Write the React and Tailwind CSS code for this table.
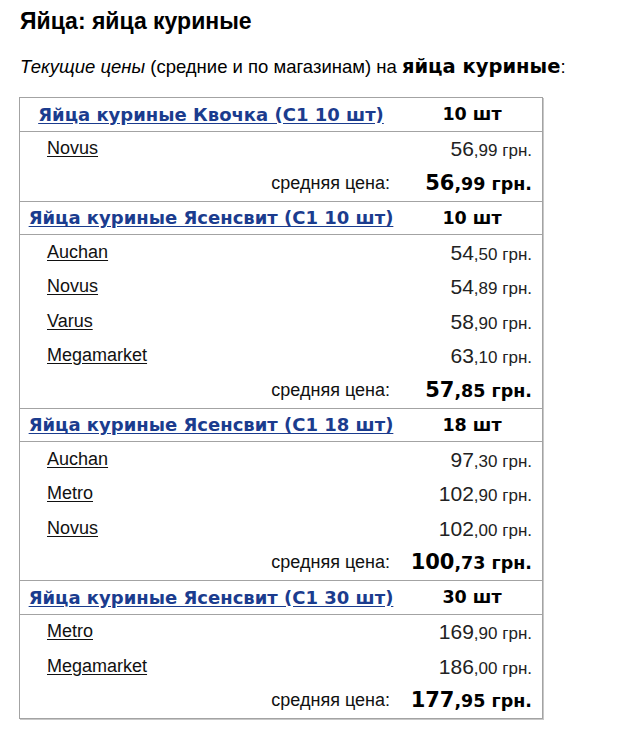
import React from 'react';

const sections = [
  {
    title: 'Яйца куриные Квочка (С1 10 шт)',
    pack: '10 шт',
    stores: [['Novus', '56', ',99']],
    avg: ['56', ',99'],
  },
  {
    title: 'Яйца куриные Ясенсвит (С1 10 шт)',
    pack: '10 шт',
    stores: [
      ['Auchan', '54', ',50'],
      ['Novus', '54', ',89'],
      ['Varus', '58', ',90'],
      ['Megamarket', '63', ',10'],
    ],
    avg: ['57', ',85'],
  },
  {
    title: 'Яйца куриные Ясенсвит (С1 18 шт)',
    pack: '18 шт',
    stores: [
      ['Auchan', '97', ',30'],
      ['Metro', '102', ',90'],
      ['Novus', '102', ',00'],
    ],
    avg: ['100', ',73'],
  },
  {
    title: 'Яйца куриные Ясенсвит (С1 30 шт)',
    pack: '30 шт',
    stores: [
      ['Metro', '169', ',90'],
      ['Megamarket', '186', ',00'],
    ],
    avg: ['177', ',95'],
  },
];

const verdana = "font-['DejaVu_Sans',Verdana,sans-serif] font-bold";

const Section = ({ s, first }) => (
  <div className={first ? '' : 'border-t border-[#a3a3a3]'}>
    {/* header */}
    <div className="grid grid-cols-[382px_1fr] h-[33.5px] items-center border-b border-[#a3a3a3]">
      <div className="text-center">
        <a href="#" className={`${verdana} text-[18px] text-[#1b3c8e] underline underline-offset-2`}>
          {s.title}
        </a>
      </div>
      <div className={`${verdana} text-[17.5px] text-black text-center`}>{s.pack}</div>
    </div>
    {/* stores */}
    {s.stores.map(([name, whole, cents]) => (
      <div key={name} className="grid grid-cols-[382px_1fr] h-[34.5px] items-center">
        <div className="pl-[27px]">
          <a href="#" className="text-[18px] text-[#111] underline underline-offset-2">{name}</a>
        </div>
        <div className="text-right pr-[10px] text-[#222]">
          <span className="text-[21px]">{whole}</span>
          <span className="text-[17px]">{cents} грн.</span>
        </div>
      </div>
    ))}
    {/* average */}
    <div className="grid grid-cols-[382px_1fr] h-[34.5px] items-center">
      <div className="text-right pr-[12px] text-[18px] text-[#111]">средняя цена:</div>
      <div className={`${verdana} text-right pr-[10px] text-black`}>
        <span className="text-[21px]">{s.avg[0]}</span>
        <span className="text-[17.5px]">{s.avg[1]} грн.</span>
      </div>
    </div>
  </div>
);

export default function App() {
  return (
    <div className="min-h-[744px] bg-white px-[20px] pt-[6px] font-['Liberation_Sans',Arial,sans-serif] text-black">
      <h1 className="text-[23px] font-bold leading-[30px]">Яйца: яйца куриные</h1>
      <p className="mt-[19px] text-[18.5px] leading-[24px]">
        <i>Текущие цены</i> (средние и по магазинам) на{' '}
        <b className={`${verdana} text-[19.5px] leading-[24px]`}>яйца куриные</b>:
      </p>
      <div className="mt-[18px] ml-[-1px] w-[524px] border border-[#a3a3a3] shadow-[1px_1px_0_#c8c8c8]">
        {sections.map((s, i) => (
          <Section key={s.title} s={s} first={i === 0} />
        ))}
      </div>
    </div>
  );
}
